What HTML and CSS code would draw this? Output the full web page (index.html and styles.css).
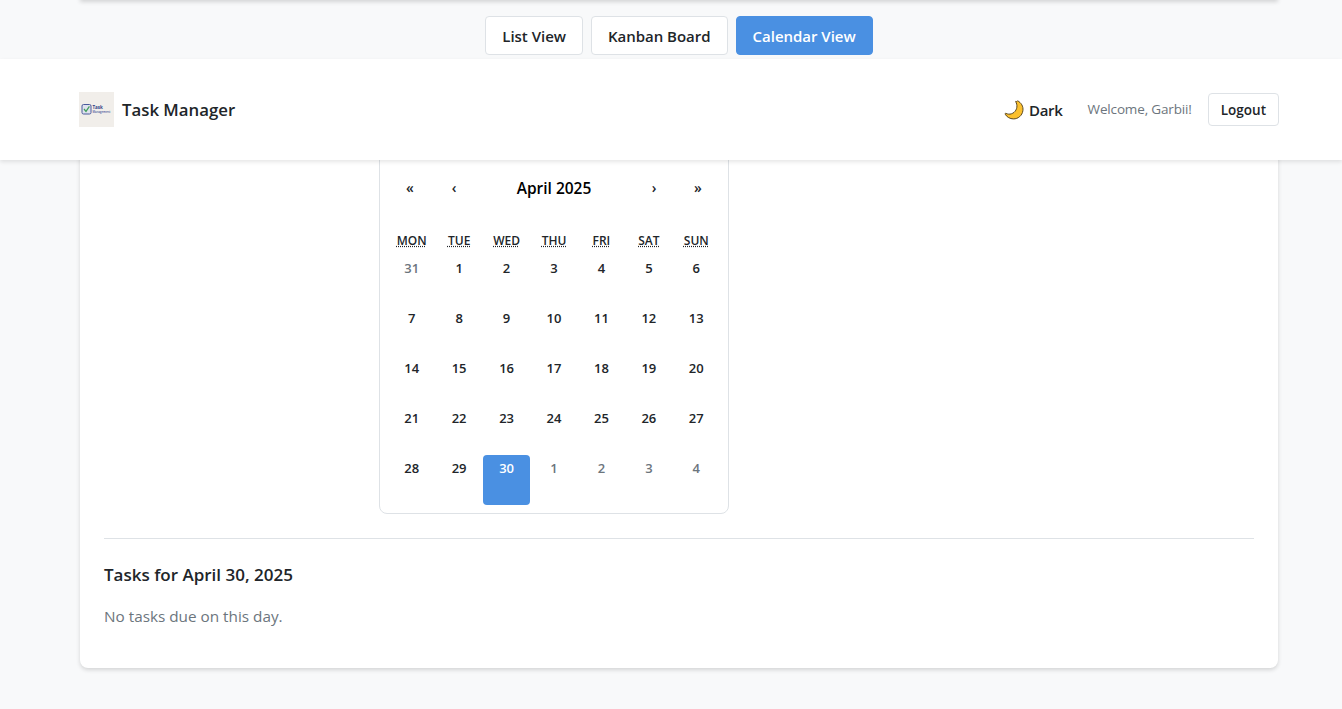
FILE: index.html
```html
<!DOCTYPE html>
<html lang="en">
<head>
    <meta charset="UTF-8">
    <meta name="viewport" content="width=device-width, initial-scale=1.0">
    <title>Task Manager</title>
    <link rel="stylesheet" href="styles.css">
</head>
<body>
    <div class="top-strip">
        <div class="prev-card"></div>
        <div class="view-tabs">
            <button class="tab">List View</button>
            <button class="tab">Kanban Board</button>
            <button class="tab tab-active">Calendar View</button>
        </div>
    </div>

    <header class="navbar">
        <div class="brand">
            <div class="logo">
                <svg width="35" height="35" viewBox="0 0 35 35">
                    <rect width="35" height="35" fill="#f1eeea"/>
                    <rect x="3" y="12.500" width="9" height="9.500" rx="1.500" fill="#dfe2ee" stroke="#4a5a9c" stroke-width="1"/>
                    <path d="M5 17l2 2.400 3.400-5" fill="none" stroke="#3f9f5a" stroke-width="1.200"/>
                    <text class="logo-task" x="13.500" y="17">Task</text>
                    <text class="logo-sub" x="13.500" y="20.500">Management</text>
                </svg>
            </div>
            <span class="brand-name">Task Manager</span>
        </div>
        <div class="nav-right">
            <div class="theme-toggle">
                <svg class="moon" width="20" height="20" viewBox="0 0 20 20">
                    <path d="M13.500.8c3.700 1.800 6 5.600 5.400 9.900-.7 4.800-4.800 8.300-9.500 8.200-3.300 0-6.600-1.800-8.200-4.700-.3-.6.100-1 .7-.8 1.700.8 3.700 1 5.500.4 4-1.300 6.300-5.500 5.300-9.600-.2-.9-.5-1.600-.9-2.300-.3-.6.100-1 .7-.1z" fill="#fbc02d" stroke="#5a4720" stroke-width="1"/>
                </svg>
                <span>Dark</span>
            </div>
            <span class="welcome">Welcome, Garbii!</span>
            <button class="logout">Logout</button>
        </div>
    </header>

    <main class="card">
        <div class="calendar">
            <div class="cal-nav">
                <button class="cal-btn">«</button>
                <button class="cal-btn">‹</button>
                <span class="cal-title">April 2025</span>
                <button class="cal-btn">›</button>
                <button class="cal-btn">»</button>
            </div>
            <div class="cal-weekdays">
                <abbr title="Monday">Mon</abbr>
                <abbr title="Tuesday">Tue</abbr>
                <abbr title="Wednesday">Wed</abbr>
                <abbr title="Thursday">Thu</abbr>
                <abbr title="Friday">Fri</abbr>
                <abbr title="Saturday">Sat</abbr>
                <abbr title="Sunday">Sun</abbr>
            </div>
            <div class="cal-days">
                <div class="day muted">31</div>
                <div class="day">1</div>
                <div class="day">2</div>
                <div class="day">3</div>
                <div class="day">4</div>
                <div class="day">5</div>
                <div class="day">6</div>
                <div class="day">7</div>
                <div class="day">8</div>
                <div class="day">9</div>
                <div class="day">10</div>
                <div class="day">11</div>
                <div class="day">12</div>
                <div class="day">13</div>
                <div class="day">14</div>
                <div class="day">15</div>
                <div class="day">16</div>
                <div class="day">17</div>
                <div class="day">18</div>
                <div class="day">19</div>
                <div class="day">20</div>
                <div class="day">21</div>
                <div class="day">22</div>
                <div class="day">23</div>
                <div class="day">24</div>
                <div class="day">25</div>
                <div class="day">26</div>
                <div class="day">27</div>
                <div class="day">28</div>
                <div class="day">29</div>
                <div class="day selected">30</div>
                <div class="day muted">1</div>
                <div class="day muted">2</div>
                <div class="day muted">3</div>
                <div class="day muted">4</div>
            </div>
        </div>

        <hr class="divider">

        <h3 class="tasks-title">Tasks for April 30, 2025</h3>
        <p class="no-tasks">No tasks due on this day.</p>
    </main>
</body>
</html>
```

FILE: styles.css
```css
* {
    box-sizing: border-box;
}

body {
    font-family: "Open Sans", "Noto Sans", sans-serif;
    background-color: #f8f9fa;
    color: #212529;
    margin: 0;
    padding: 0;
    height: 709px;
    overflow: hidden;
}

button {
    font-family: inherit;
}

.top-strip {
    display: flow-root;
    height: 59px;
}

.prev-card {
    width: 1198px;
    height: 8px;
    margin: -8px 0 0 80px;
    background-color: #fff;
    box-shadow: 0 2px 4px rgba(0, 0, 0, 0.15);
}

.view-tabs {
    display: flex;
    justify-content: center;
    gap: 8px;
    padding: 16px 0 0 16px;
}

.tab {
    height: 39px;
    padding: 0 16px;
    background-color: #fff;
    border: 1px solid #dee2e6;
    border-radius: 4px;
    color: #212529;
    font-size: 15px;
    font-weight: 600;
    letter-spacing: -0.02px;
}

.tab-active {
    background-color: #4a90e2;
    border-color: #4a90e2;
    color: #fff;
}

.navbar {
    position: relative;
    z-index: 2;
    display: flex;
    align-items: center;
    justify-content: space-between;
    height: 101px;
    padding: 0 63px 0 79px;
    background-color: #fff;
    box-shadow: 0 2px 4px rgba(0, 0, 0, 0.1);
}

.brand {
    display: flex;
    align-items: center;
    gap: 8px;
}

.logo {
    display: flex;
    width: 35px;
    height: 35px;
}

.logo-task {
    fill: #2f3d86;
    font-size: 4.5px;
    font-weight: 700;
}

.logo-sub {
    fill: #4a5a9c;
    font-size: 2.8px;
    font-weight: 600;
}

.brand-name {
    font-size: 16.8px;
    font-weight: 600;
}

.nav-right {
    display: flex;
    align-items: center;
}

.theme-toggle {
    display: flex;
    align-items: center;
    gap: 5px;
    font-size: 15px;
    font-weight: 600;
    margin-right: 25px;
    letter-spacing: -0.3px;
}

.moon {
    display: block;
}

.welcome {
    color: #6c757d;
    font-size: 13.5px;
    letter-spacing: -0.15px;
    margin: -2px 16px 0 0;
}

.logout {
    height: 33px;
    padding: 0 12px;
    background-color: #fff;
    border: 1px solid #dee2e6;
    border-radius: 4px;
    color: #212529;
    font-size: 13.5px;
    font-weight: 600;
}

.card {
    width: 1198px;
    height: 518px;
    margin-left: 80px;
    padding: 0 24px;
    background-color: #fff;
    border-radius: 0 0 8px 8px;
    box-shadow: 0 2px 4px rgba(0, 0, 0, 0.15);
}

.calendar {
    width: 350px;
    height: 364px;
    margin: -10px 0 0 275px;
    padding: 0 8px;
    border: 1px solid #dee2e6;
    border-radius: 8px;
    background-color: #fff;
}

.cal-nav {
    display: grid;
    grid-template-columns: 44px 44px 1fr 44px 44px;
    align-items: center;
    height: 44px;
    margin-top: 14px;
}

.cal-btn {
    border: none;
    background: none;
    padding: 0;
    color: #212529;
    font-size: 14px;
    font-weight: 600;
    text-align: center;
}

.cal-title {
    padding-top: 2px;
    font-size: 15.5px;
    font-weight: 600;
    color: #000;
    text-align: center;
}

.cal-weekdays {
    display: grid;
    grid-template-columns: repeat(7, 1fr);
    margin: 19px 0 3px;
    height: 24px;
    align-items: center;
    text-align: center;
}

.cal-weekdays abbr {
    font-size: 12px;
    font-weight: 600;
    text-transform: uppercase;
}

.cal-days {
    display: grid;
    grid-template-columns: repeat(7, 1fr);
    grid-auto-rows: 50px;
}

.day {
    padding-top: 4px;
    font-size: 13px;
    font-weight: 600;
    text-align: center;
    border-radius: 4px;
}

.muted {
    color: #6c757d;
}

.selected {
    background-color: #4a90e2;
    color: #fff;
}

.divider {
    height: 1px;
    margin: 24px 0 0;
    border: none;
    background-color: #dee2e6;
}

.tasks-title {
    margin: 24px 0 0;
    font-size: 17px;
    font-weight: 600;
}

.no-tasks {
    margin: 20px 0 0;
    color: #6c757d;
    font-size: 15.3px;
}
```
